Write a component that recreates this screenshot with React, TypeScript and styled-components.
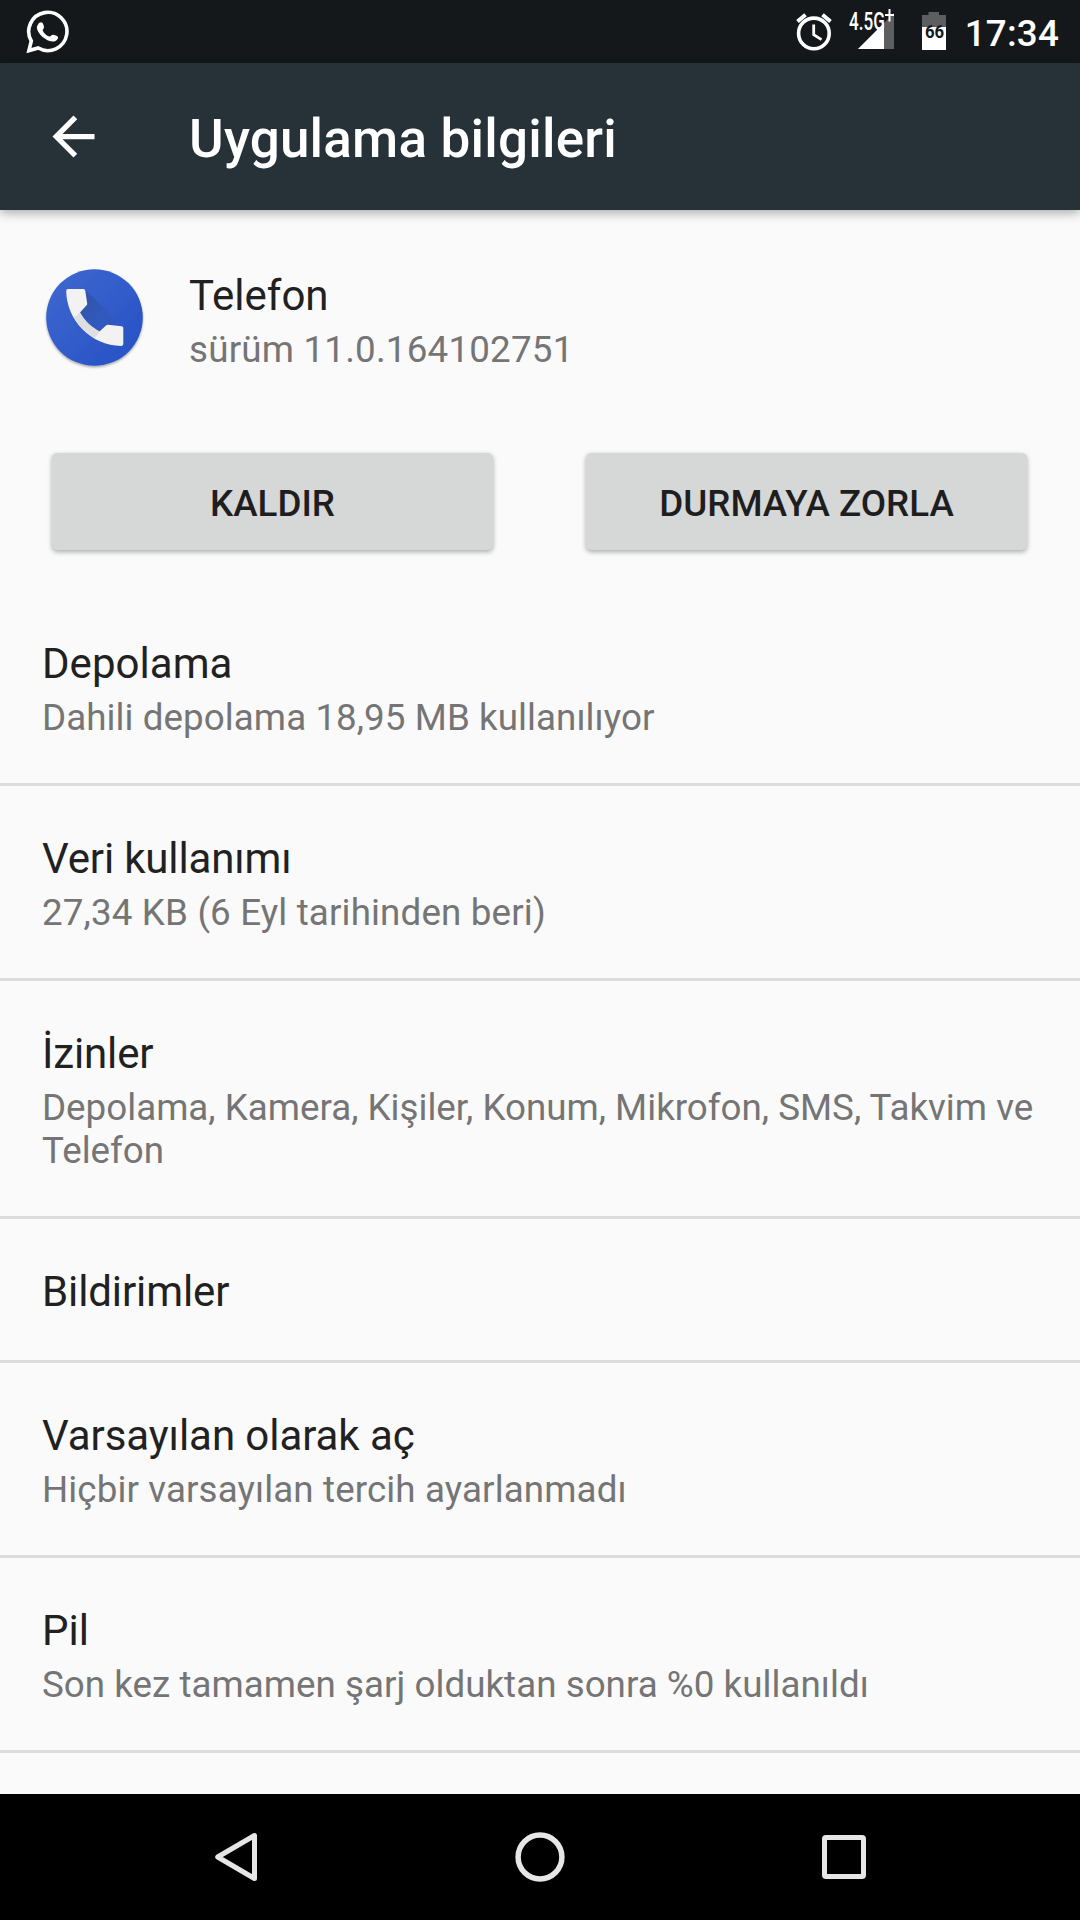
import React from "react";
import styled, { createGlobalStyle } from "styled-components";

const Global = createGlobalStyle`
  * { box-sizing: border-box; }
  body { margin: 0; background: #fafafa; font-family: Roboto, "Noto Sans", sans-serif; }
`;

const Screen = styled.div`
  width: 1080px;
  height: 1920px;
  display: flex;
  flex-direction: column;
  background: #fafafa;
  overflow: hidden;
`;

const StatusBar = styled.header`
  height: 63px;
  flex: none;
  display: flex;
  justify-content: space-between;
  background: #14181b;
  color: #fff;
  padding: 0 21px 0 26px;
`;

const StatusGroup = styled.div`
  display: flex;
  align-items: flex-start;
`;

const SignalSlot = styled.div`
  margin-left: 14px;
`;

const BatterySlot = styled.div`
  margin-left: 25px;
`;

const Clock = styled.span`
  font-size: 36.75px;
  font-weight: 500;
  line-height: 43px;
  letter-spacing: 0.2px;
  padding-top: 12px;
  margin-left: 19px;
`;

const Toolbar = styled.div`
  height: 147px;
  flex: none;
  display: flex;
  align-items: center;
  background: #263238;
  color: #fff;
  padding: 0 42px;
  position: relative;
  box-shadow: 0 3px 10px rgba(0, 0, 0, 0.32);
`;

const Title = styled.h1`
  margin: 5px 0 0 84px;
  font-size: 53px;
  font-weight: 500;
  line-height: 62px;
  letter-spacing: 0.2px;
`;

const Content = styled.main`
  flex: 1;
  min-height: 0;
  overflow: hidden;
`;

const AppHeader = styled.section`
  display: flex;
  padding: 60px 42px 0;
  height: 243px;
`;

const LogoSlot = styled.div`
  flex: none;
  width: 105px;
  height: 105px;
  margin-top: -5px;
`;

const AppText = styled.div`
  margin: 0 0 0 42px;
  padding-top: 1px;
`;

const Primary = styled.div<{ $tracking?: number }>`
  font-size: 42px;
  line-height: 49px;
  letter-spacing: ${(p) => p.$tracking ?? 0}px;
  color: #212121;
  white-space: nowrap;
`;

const Secondary = styled.div<{ $tracking?: number }>`
  margin-top: 8px;
  font-size: 36.75px;
  line-height: 43px;
  letter-spacing: ${(p) => p.$tracking ?? 0}px;
  color: #757575;
`;

const Actions = styled.div`
  display: flex;
  gap: 93px;
  padding: 0 53px 0 52px;
`;

const ActionButton = styled.button`
  flex: 1;
  height: 97px;
  border: 0;
  border-radius: 5px;
  padding: 4px 0 0;
  background: #d6d7d7;
  box-shadow: 0 2px 5px rgba(0, 0, 0, 0.32);
  color: #1e1e1e;
  font: 500 36.75px/43px Roboto, "Noto Sans", sans-serif;
`;

const List = styled.div`
  margin-top: 41px;
`;

const Row = styled.div`
  border-bottom: 3px solid #dcdcdc;
  padding: 48px 42px 44px;
`;

const NavBar = styled.nav`
  height: 126px;
  flex: none;
  background: #000;
  display: flex;
  justify-content: center;
  align-items: center;
`;

const NavButton = styled.div`
  width: 304px;
  display: flex;
  justify-content: center;
`;

type Entry = { title: string; titleTracking?: number; summary?: string; summaryTracking?: number };

const rows: Entry[] = [
  { title: "Depolama", titleTracking: 0.05, summary: "Dahili depolama 18,95 MB kullanılıyor", summaryTracking: 0.065 },
  { title: "Veri kullanımı", titleTracking: -0.15, summary: "27,34 KB (6 Eyl tarihinden beri)", summaryTracking: 0.15 },
  { title: "İzinler", titleTracking: -0.15, summary: "Depolama, Kamera, Kişiler, Konum, Mikrofon, SMS, Takvim ve Telefon" },
  { title: "Bildirimler", titleTracking: -0.11 },
  { title: "Varsayılan olarak aç", titleTracking: -0.06, summary: "Hiçbir varsayılan tercih ayarlanmadı", summaryTracking: 0.11 },
  { title: "Pil", summary: "Son kez tamamen şarj olduktan sonra %0 kullanıldı", summaryTracking: 0.025 },
];

const ChatIcon = () => (
  <svg width="44" height="63" viewBox="26 0 44 63" fill="none">
    <path d="M28.9 50.6 L31.3 41 A19.1 19.1 0 1 1 38.3 48 Z" stroke="#fff" strokeWidth="3.6" />
    <path
      d="M38.2 24.2c1-1.8 3-2.5 4.4-1.3.7.9 1.4 3.1 1.4 4.3 0 1.3-1.5 2-1.3 3.2 1 2.5 4 5.3 6.6 6.2 1.5.2 2-1.6 3.5-1.8 1.6.1 4.8 1.2 5.3 2.3.3 1.7-1.6 3.9-3.7 4.3-7.6 1-17.5-8-17.5-14 0-1.2.7-2.4 1.3-3.2z"
      fill="#fff"
    />
  </svg>
);

const AlarmIcon = () => (
  <svg width="38" height="63" viewBox="795 0 38 63" fill="none" stroke="#fff">
    <circle cx="813.9" cy="33.4" r="15.3" strokeWidth="3.6" />
    <path d="M797.5 21.5l8-6.7M830.5 21.5l-8-6.7" strokeWidth="4" />
    <path d="M813.7 24.5v10.2l7.8 4.9" strokeWidth="2.8" />
  </svg>
);

const SignalIcon = () => (
  <svg width="50" height="63" viewBox="847 0 50 63">
    <path d="M894 13v36h-36z" fill="#5c5e60" />
    <path d="M884 23v26h-26z" fill="#fff" />
    <text transform="translate(849 30) scale(0.67 1)" fontFamily="Roboto" fontSize="25.5" fontWeight="500" fill="#fff">4.5G</text>
    <path d="M889.5 9v12.5M885 15h9" stroke="#fff" strokeWidth="2" />
  </svg>
);

const BatteryIcon = () => (
  <svg width="24" height="63" viewBox="922 0 24 63">
    <path d="M922 15h6.5v-3h10.5v3h7v12h-24z" fill="#5c5e60" />
    <path d="M922 27h24v23h-24z" fill="#fff" />
    <text transform="translate(934.6 38) scale(0.88 1)" textAnchor="middle" fontFamily="Roboto" fontSize="19" fontWeight="700" fill="#14181b">66</text>
  </svg>
);

const BackArrow = () => (
  <svg width="63" height="63" viewBox="0 0 24 24" fill="#fff">
    <path d="M20 11H7.83l5.59-5.59L12 4l-8 8 8 8 1.410-1.410L7.830 13H20v-2z" />
  </svg>
);

const PhoneLogo = () => (
  <svg width="105" height="105" viewBox="42 265 105 105">
    <defs>
      <linearGradient id="disc" x1="0" y1="0" x2="1" y2="1">
        <stop offset="0" stopColor="#4168cf" />
        <stop offset="1" stopColor="#2450c4" />
      </linearGradient>
      <linearGradient id="cast" x1="0" y1="0" x2="1" y2="1">
        <stop offset="0.2" stopColor="#3154a8" stopOpacity="0.9" />
        <stop offset="0.85" stopColor="#3154a8" stopOpacity="0" />
      </linearGradient>
      <filter id="drop" x="-10%" y="-10%" width="120%" height="125%">
        <feDropShadow dx="0" dy="1.5" stdDeviation="1.3" floodColor="#000" floodOpacity="0.35" />
      </filter>
    </defs>
    <circle cx="94.5" cy="317.5" r="48.3" fill="url(#disc)" filter="url(#drop)" />
    <path d="M85.500 290l38 37-24 6-20-21z" fill="url(#cast)" />
    <path d="M68 289h15.500q1.500 0 1.700 1.500l2 13q.1 1-.6 1.800l-6.600 7.200c4.500 8.500 11 14.500 19.500 19l6.500-6q.8-.8 2-.7l13.500 1.500q1.800.3 1.800 1.800v16q0 1.800-1.800 1.800C91 346 66.500 320 66.200 290.800q0-1.800 1.800-1.800z" fill="#f2f2f2" />
    <path d="M80 312.500c4.500 8.500 11 14.500 19.500 19l-4.500 6.500C85.500 332.500 79 326 73.700 317.500z" fill="#dfdfdf" />
  </svg>
);

export default function App() {
  return (
    <Screen>
      <Global />
      <StatusBar>
        <StatusGroup><ChatIcon /></StatusGroup>
        <StatusGroup>
          <AlarmIcon />
          <SignalSlot><SignalIcon /></SignalSlot>
          <BatterySlot><BatteryIcon /></BatterySlot>
          <Clock>17:34</Clock>
        </StatusGroup>
      </StatusBar>
      <Toolbar>
        <BackArrow />
        <Title>Uygulama bilgileri</Title>
      </Toolbar>
      <Content>
        <AppHeader>
          <LogoSlot><PhoneLogo /></LogoSlot>
          <AppText>
            <Primary>Telefon</Primary>
            <Secondary $tracking={0.2}>sürüm 11.0.164102751</Secondary>
          </AppText>
        </AppHeader>
        <Actions>
          <ActionButton>KALDIR</ActionButton>
          <ActionButton>DURMAYA ZORLA</ActionButton>
        </Actions>
        <List>
          {rows.map((row) => (
            <Row key={row.title}>
              <Primary $tracking={row.titleTracking}>{row.title}</Primary>
              {row.summary && <Secondary $tracking={row.summaryTracking}>{row.summary}</Secondary>}
            </Row>
          ))}
        </List>
      </Content>
      <NavBar>
        <NavButton>
          <svg width="50" height="64" viewBox="211 1825 50 64" fill="none">
            <path d="M254.5 1835.500v43L217.700 1857z" stroke="#e6e6e6" strokeWidth="5" strokeLinejoin="round" />
          </svg>
        </NavButton>
        <NavButton>
          <svg width="50" height="64" viewBox="515 1825 50 64" fill="none">
            <circle cx="540" cy="1857" r="21.900" stroke="#e6e6e6" strokeWidth="5.500" />
          </svg>
        </NavButton>
        <NavButton>
          <svg width="50" height="64" viewBox="819 1825 50 64" fill="none">
            <rect x="824.5" y="1837.5" width="39" height="39" rx="1.5" stroke="#e6e6e6" strokeWidth="5" />
          </svg>
        </NavButton>
      </NavBar>
    </Screen>
  );
}
